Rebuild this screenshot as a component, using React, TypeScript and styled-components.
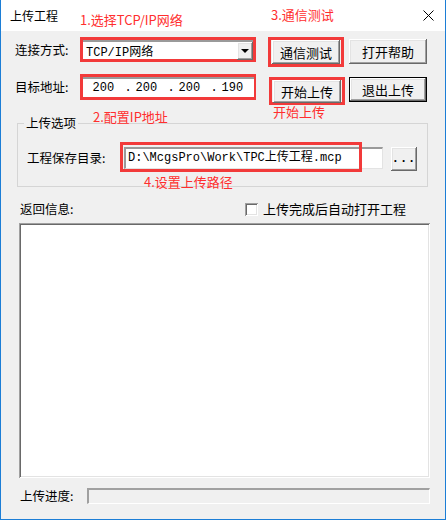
import styled, { createGlobalStyle } from "styled-components";

const GlobalStyle = createGlobalStyle`
  html, body {
    margin: 0;
    padding: 0;
    background: #ffffff;
  }
  body {
    font-family: "Noto Sans CJK SC", "Liberation Sans", sans-serif;
    font-size: 12.5px;
    color: #000;
  }
`;

const red = "#f23a3a";
const mono = `"Liberation Mono", "Noto Sans CJK SC", monospace`;

const Window = styled.div`
  position: relative;
  width: 446px;
  height: 520px;
  box-sizing: border-box;
  border: 1px solid #1c7ed6;
  border-top: none;
  background: #f0f0f0;
  display: flex;
  flex-direction: column;
`;

const TitleBar = styled.div`
  height: 31px;
  background: #ffffff;
  display: flex;
  align-items: center;
  justify-content: space-between;
  padding: 0 9px 0 9px;
  box-sizing: border-box;
`;

const Title = styled.div`
  font-size: 12px;
  line-height: 14px;
`;

const Close = styled.div`
  width: 16px;
  height: 16px;
  display: flex;
  align-items: center;
  justify-content: center;
`;

const Row = styled.div<{ $top: number; $left?: number }>`
  display: flex;
  align-items: flex-start;
  margin-top: ${(p) => p.$top}px;
  padding-left: ${(p) => p.$left ?? 14}px;
`;

const Label = styled.div<{ $w: number; $h?: number }>`
  width: ${(p) => p.$w}px;
  height: ${(p) => p.$h ?? 25}px;
  line-height: ${(p) => p.$h ?? 25}px;
  white-space: nowrap;
  flex-shrink: 0;
`;

const RedBox = styled.div<{ $w: number; $h: number; $ml?: number; $mt?: number }>`
  width: ${(p) => p.$w}px;
  height: ${(p) => p.$h}px;
  margin-left: ${(p) => p.$ml ?? 0}px;
  margin-top: ${(p) => p.$mt ?? 0}px;
  box-sizing: border-box;
  border: 3px solid ${red};
  display: flex;
  align-items: center;
  justify-content: center;
  flex-shrink: 0;
`;

const Field = styled.div<{ $pl?: number }>`
  flex: 1;
  align-self: stretch;
  background: #ffffff;
  border-top: 2px solid #9a9a9a;
  display: flex;
  align-items: center;
  font-family: ${mono};
  font-size: 12px;
  padding-left: ${(p) => p.$pl ?? 0}px;
`;

const ComboText = styled.div`
  padding-left: 3px;
  flex: 1;
`;

const DropButton = styled.div`
  width: 16px;
  height: 18px;
  background: #f0f0f0;
  box-shadow: inset -1px -1px #696969, inset 1px 1px #ffffff,
    inset -2px -2px #a0a0a0, inset 2px 2px #e3e3e3;
  display: flex;
  align-items: center;
  justify-content: center;
`;

const Triangle = styled.div`
  width: 0;
  height: 0;
  border-left: 4px solid transparent;
  border-right: 4px solid transparent;
  border-top: 4px solid #000;
`;

const IpPart = styled.span<{ $w: number }>`
  display: inline-block;
  width: ${(p) => p.$w}px;
`;

const Button = styled.div<{ $w: number; $h: number; $default?: boolean; $ml?: number; $mt?: number }>`
  width: ${(p) => p.$w}px;
  height: ${(p) => p.$h}px;
  margin-left: ${(p) => p.$ml ?? 0}px;
  margin-top: ${(p) => p.$mt ?? 0}px;
  box-sizing: border-box;
  background: #f0f0f0;
  border: ${(p) => (p.$default ? "1px solid #000" : "none")};
  box-shadow: inset -1px -1px #696969, inset 1px 1px #ffffff,
    inset -2px -2px #a0a0a0, inset 2px 2px #e3e3e3;
  display: flex;
  align-items: center;
  justify-content: center;
  font-size: 13px;
  flex-shrink: 0;
`;

const Dots = styled.span`
  font-family: ${mono};
  font-weight: 700;
  letter-spacing: 1px;
  font-size: 12px;
`;

const Group = styled.fieldset`
  margin: 11px 0 0 16px;
  width: 411px;
  box-sizing: border-box;
  border: 1px solid #d5d5d5;
  padding: 3px 0 15px 9px;
`;

const Legend = styled.legend`
  padding: 0 2px;
  margin-left: -3px;
  font-size: 12.5px;
  line-height: 14px;
`;

const PathRow = styled.div`
  display: flex;
  align-items: flex-start;
  margin-top: 14px;
`;

const PathField = styled.div`
  width: 259px;
  height: 22px;
  box-sizing: border-box;
  background: #ffffff;
  border-top: 2px solid #9a9a9a;
  border-left: 2px solid #9a9a9a;
  border-right: 1px solid #e3e3e3;
  border-bottom: 1px solid #e3e3e3;
  font-family: ${mono};
  font-size: 12px;
  line-height: 19px;
  padding-left: 2px;
  white-space: nowrap;
`;

const CheckLabel = styled.div`
  display: flex;
  align-items: flex-start;
  line-height: 14px;
  font-size: 13px;
`;

const Checkbox = styled.div`
  width: 13px;
  height: 13px;
  box-sizing: border-box;
  background: #ffffff;
  box-shadow: inset 1px 1px #a0a0a0, inset -1px -1px #ffffff,
    inset 2px 2px #696969, inset -2px -2px #e3e3e3;
  margin-top: 1px;
  margin-right: 5px;
`;

const TextArea = styled.div`
  margin: 7px 0 0 18px;
  width: 411px;
  height: 255px;
  box-sizing: border-box;
  background: #ffffff;
  box-shadow: inset 1px 1px #a0a0a0, inset -1px -1px #ffffff,
    inset 2px 2px #696969, inset -2px -2px #e3e3e3;
`;

const Progress = styled.div`
  width: 343px;
  height: 16px;
  box-sizing: border-box;
  background: #f0f0f0;
  border-top: 2px solid #a0a0a0;
  border-left: 2px solid #a0a0a0;
  border-right: 1px solid #ffffff;
  border-bottom: 1px solid #ffffff;
`;

const Note = styled.div<{ $x: number; $y: number }>`
  position: absolute;
  left: ${(p) => p.$x}px;
  top: ${(p) => p.$y}px;
  color: #ff2e2e;
  font-size: 13px;
  line-height: 16px;
  white-space: nowrap;
`;

const Frame = styled.div<{ $x: number; $y: number; $w: number; $h: number }>`
  position: absolute;
  left: ${(p) => p.$x}px;
  top: ${(p) => p.$y}px;
  width: ${(p) => p.$w}px;
  height: ${(p) => p.$h}px;
  box-sizing: border-box;
  border: 3px solid ${red};
`;

export default function App() {
  return (
    <>
      <GlobalStyle />
      <Window>
        <TitleBar>
          <Title>上传工程</Title>
          <Close>
            <svg width="11" height="11" viewBox="0 0 11 11">
              <path d="M0.5 0.5 L10.5 10.5 M10.5 0.5 L0.5 10.5" stroke="#000" strokeWidth="1" />
            </svg>
          </Close>
        </TitleBar>

        <Row $top={6}>
          <Label $w={65}>连接方式:</Label>
          <RedBox $w={176} $h={25}>
            <Field>
              <ComboText>TCP/IP网络</ComboText>
              <DropButton>
                <Triangle />
              </DropButton>
            </Field>
          </RedBox>
          <RedBox $w={76} $h={30} $ml={12}>
            <Button $w={68} $h={24}>通信测试</Button>
          </RedBox>
          <Button $w={78} $h={25} $ml={5} $mt={2}>打开帮助</Button>
        </Row>

        <Row $top={7}>
          <Label $w={65}>目标地址:</Label>
          <RedBox $w={176} $h={26}>
            <Field $pl={10}>
              <IpPart $w={32}>200</IpPart>
              <IpPart $w={11}>.</IpPart>
              <IpPart $w={32}>200</IpPart>
              <IpPart $w={11}>.</IpPart>
              <IpPart $w={32}>200</IpPart>
              <IpPart $w={11}>.</IpPart>
              <IpPart $w={32}>190</IpPart>
            </Field>
          </RedBox>
          <RedBox $w={76} $h={28} $ml={13} $mt={3}>
            <Button $w={68} $h={23}>开始上传</Button>
          </RedBox>
          <Button $w={78} $h={25} $ml={4} $mt={3} $default>退出上传</Button>
        </Row>

        <Group>
          <Legend>上传选项</Legend>
          <PathRow>
            <Label $w={97} $h={22}>工程保存目录:</Label>
            <PathField>D:\McgsPro\Work\TPC上传工程.mcp</PathField>
            <Button $w={26} $h={24} $ml={8}>
              <Dots>...</Dots>
            </Button>
          </PathRow>
        </Group>

        <Row $top={15} $left={19}>
          <Label $w={225} $h={14}>返回信息:</Label>
          <CheckLabel>
            <Checkbox />
            上传完成后自动打开工程
          </CheckLabel>
        </Row>

        <TextArea />

        <Row $top={10} $left={19}>
          <Label $w={67} $h={16}>上传进度:</Label>
          <Progress />
        </Row>

        <Note $x={79} $y={12}>1.选择TCP/IP网络</Note>
        <Note $x={270} $y={7}>3.通信测试</Note>
        <Note $x={92} $y={109}>2.配置IP地址</Note>
        <Note $x={272} $y={104}>开始上传</Note>
        <Note $x={143} $y={174}>4.设置上传路径</Note>
        <Frame $x={119} $y={142} $w={242} $h={30} />
      </Window>
    </>
  );
}
